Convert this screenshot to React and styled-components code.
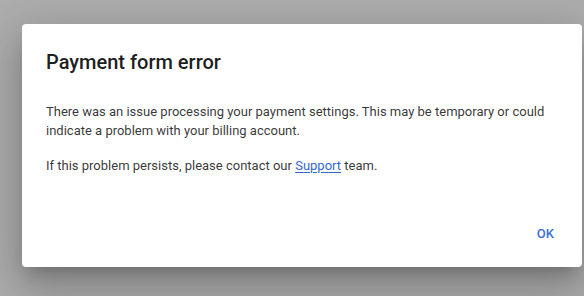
import React from "react";
import styled, { createGlobalStyle } from "styled-components";

const GlobalStyle = createGlobalStyle`
  html, body {
    margin: 0;
    padding: 0;
    width: 584px;
    height: 296px;
    overflow: hidden;
    background: #adadad;
    font-family: Roboto, "Liberation Sans", sans-serif;
  }
`;

const Backdrop = styled.div`
  width: 584px;
  height: 296px;
  box-sizing: border-box;
  padding: 24px 0 0 22px;
  background: #adadad;
`;

const Dialog = styled.div`
  width: 560px;
  height: 243px;
  box-sizing: border-box;
  background: #ffffff;
  border-radius: 4px;
  display: flex;
  flex-direction: column;
  box-shadow: 0 11px 15px -7px rgba(0, 0, 0, 0.2),
    0 24px 38px 3px rgba(0, 0, 0, 0.14), 0 9px 46px 8px rgba(0, 0, 0, 0.12);
`;

const Title = styled.h2`
  margin: 0;
  padding: 24px 24px 26px;
  font-size: 20px;
  line-height: 28px;
  font-weight: 500;
  color: rgba(0, 0, 0, 0.9);
`;

const Content = styled.div`
  padding: 0 24px;
  flex: 1;
`;

const Paragraph = styled.p`
  margin: 0 0 ${(p) => (p.$last ? 0 : 16)}px;
  font-size: 13px;
  line-height: 19px;
  color: rgba(0, 0, 0, 0.8);
`;

const Link = styled.a`
  color: #3367d6;
  text-decoration: underline;
  text-underline-offset: 2px;
`;

const Actions = styled.div`
  display: flex;
  justify-content: flex-end;
  padding: 0 24px 16px;
`;

const Button = styled.button`
  height: 36px;
  padding: 0 4px;
  border: none;
  background: transparent;
  font-family: Roboto, "Liberation Sans", sans-serif;
  font-size: 13px;
  font-weight: 500;
  text-transform: uppercase;
  color: #3b6fd8;
  cursor: pointer;
`;

export default function App() {
  return (
    <>
      <GlobalStyle />
      <Backdrop>
        <Dialog role="dialog">
          <Title>Payment form error</Title>
          <Content>
            <Paragraph>
              There was an issue processing your payment settings. This may be
              temporary or could indicate a problem with your billing account.
            </Paragraph>
            <Paragraph $last>
              If this problem persists, please contact our{" "}
              <Link href="#">Support</Link> team.
            </Paragraph>
          </Content>
          <Actions>
            <Button>OK</Button>
          </Actions>
        </Dialog>
      </Backdrop>
    </>
  );
}
